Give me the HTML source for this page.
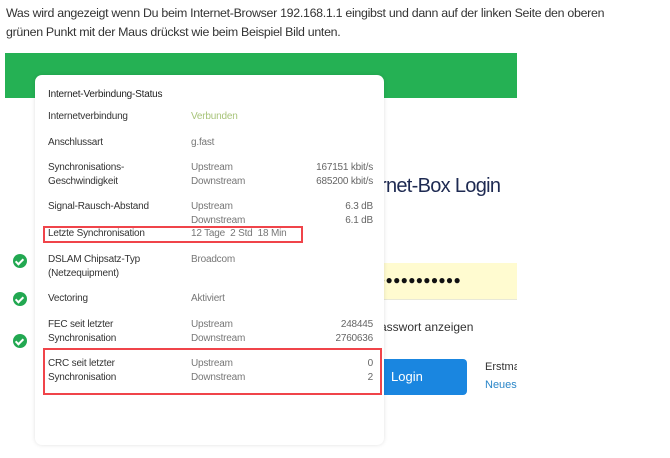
<!DOCTYPE html>
<html><head><meta charset="utf-8"><style>
body{margin:0;width:670px;height:458px;background:#fff;position:relative;overflow:hidden;font-family:"Liberation Sans",sans-serif;}
.a{position:absolute;white-space:nowrap;}
.top{left:6px;top:4px;font-size:12.4px;color:#333;line-height:19px;letter-spacing:-0.3px}
.green{left:5px;top:53px;width:512px;height:45px;background:#25b154}
.pop{left:35px;top:75px;width:349px;height:370px;background:#fff;border-radius:7px;box-shadow:0 0 4px rgba(0,0,0,.12)}
.t{font-size:10px;color:#333;letter-spacing:-0.2px;line-height:14px}
.g{color:#777}
.r{color:#666;text-align:right;width:120px}
.box{border:2px solid #f0444a;}
.chk{width:14px;height:14px;border-radius:50%;background:#22a851}
.chk:after{content:"";position:absolute;left:4px;top:2.5px;width:3px;height:6px;border:solid #fff;border-width:0 2px 2px 0;transform:rotate(45deg)}
.clip{left:0;top:0;width:517px;height:458px;overflow:hidden}
</style></head><body>
<div class="a top">Was wird angezeigt wenn Du beim Internet-Browser 192.168.1.1 eingibst und dann auf der linken Seite den oberen<br>grünen Punkt mit der Maus drückst wie beim Beispiel Bild unten.</div>
<div class="a green"></div>
<div class="a clip">
<div class="a" style="left:380px;top:175px;font-size:20px;color:#1e2a52;letter-spacing:-0.7px">rnet-Box Login</div>
<div class="a" style="left:380px;top:243px;font-size:10px;color:#444">t</div>
<div class="a" style="left:380px;top:263px;width:137px;height:36px;background:#fffbd0;border-bottom:1px solid #e8e8d8"></div>
<div class="a" style="left:378px;top:273px;font-size:12px;letter-spacing:0.3px;color:#111">●●●●●●●●●●●</div>
<div class="a" style="left:380px;top:320px;font-size:12px;color:#333">asswort anzeigen</div>
<div class="a" style="left:375px;top:359px;width:92px;height:36px;background:#1a86e0;border-radius:4px"></div>
<div class="a" style="left:391px;top:369px;font-size:13px;color:#fff">Login</div>
<div class="a" style="left:485px;top:361px;font-size:11px;color:#333">Erstmals</div>
<div class="a" style="left:485px;top:379px;font-size:11px;color:#2a86c8">Neues</div>
</div>
<div class="a chk" style="left:13px;top:254px"></div>
<div class="a chk" style="left:13px;top:292px"></div>
<div class="a chk" style="left:13px;top:334px"></div>
<div class="a pop"></div>
<div class="a t" style="left:48px;top:88px;color:#222">Internet-Verbindung-Status</div>
<div class="a t" style="left:48px;top:110px">Internetverbindung</div><div class="a t" style="left:191px;top:110px;color:#a8c47a">Verbunden</div>
<div class="a t" style="left:48px;top:136px">Anschlussart</div><div class="a t g" style="left:191px;top:136px">g.fast</div>
<div class="a t" style="left:48px;top:161px">Synchronisations-<br>Geschwindigkeit</div><div class="a t g" style="left:191px;top:161px">Upstream<br>Downstream</div><div class="a t r" style="left:253px;top:161px">167151 kbit/s<br>685200 kbit/s</div>
<div class="a t" style="left:48px;top:200px">Signal-Rausch-Abstand</div><div class="a t g" style="left:191px;top:200px">Upstream<br>Downstream</div><div class="a t r" style="left:253px;top:200px">6.3 dB<br>6.1 dB</div>
<div class="a t" style="left:48px;top:227px">Letzte Synchronisation</div><div class="a t g" style="left:191px;top:227px">12 Tage&nbsp; 2 Std&nbsp; 18 Min</div>
<div class="a t" style="left:48px;top:253px">DSLAM Chipsatz-Typ<br>(Netzequipment)</div><div class="a t g" style="left:191px;top:253px">Broadcom</div>
<div class="a t" style="left:48px;top:292px">Vectoring</div><div class="a t g" style="left:191px;top:292px">Aktiviert</div>
<div class="a t" style="left:48px;top:318px">FEC seit letzter<br>Synchronisation</div><div class="a t g" style="left:191px;top:318px">Upstream<br>Downstream</div><div class="a t r" style="left:253px;top:318px">248445<br>2760636</div>
<div class="a t" style="left:48px;top:357px">CRC seit letzter<br>Synchronisation</div><div class="a t g" style="left:191px;top:357px">Upstream<br>Downstream</div><div class="a t r" style="left:253px;top:357px">0<br>2</div>
<div class="a box" style="left:43px;top:226px;width:256px;height:13px"></div>
<div class="a box" style="left:43px;top:348px;width:335px;height:43px"></div>
</body></html>
